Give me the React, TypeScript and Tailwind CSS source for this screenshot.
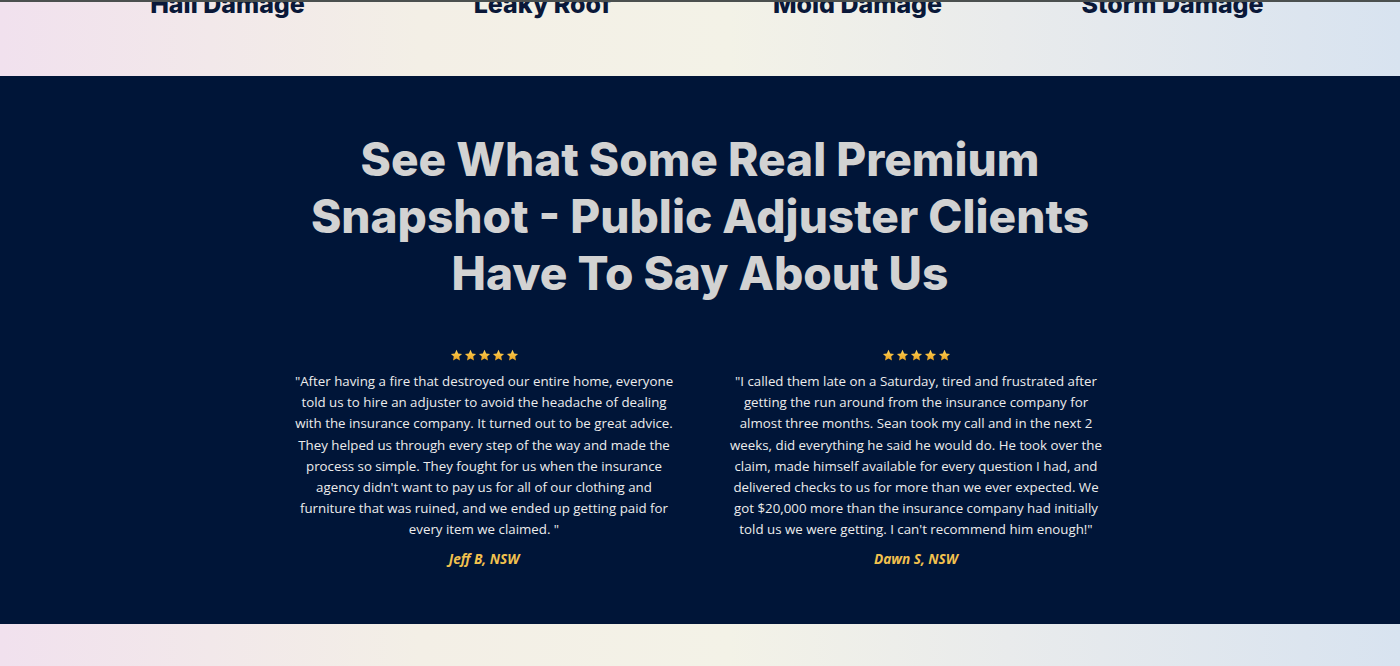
import React from "react";

const Star = () => (
  <svg width="13" height="13" viewBox="0 0 24 24">
    <defs>
      <linearGradient id="sg" x1="0" y1="0" x2="0" y2="1">
        <stop offset="0" stopColor="#ffd45a" />
        <stop offset="1" stopColor="#e9a21f" />
      </linearGradient>
    </defs>
    <path
      d="M12 1.5l3.1 6.6 7.2.9-5.3 5 1.4 7.1L12 17.6l-6.4 3.5 1.4-7.1-5.3-5 7.2-.9z"
      fill="url(#sg)"
    />
  </svg>
);

const Stars = () => (
  <div className="flex justify-center gap-[1px]">
    <Star />
    <Star />
    <Star />
    <Star />
    <Star />
  </div>
);

const items = ["Hail Damage", "Leaky Roof", "Mold Damage", "Storm Damage"];

const testimonials = [
  {
    text: "\"After having a fire that destroyed our entire home, everyone told us to hire an adjuster to avoid the headache of dealing with the insurance company. It turned out to be great advice. They helped us through every step of the way and made the process so simple. They fought for us when the insurance agency didn't want to pay us for all of our clothing and furniture that was ruined, and we ended up getting paid for every item we claimed. \"",
    name: "Jeff B, NSW",
  },
  {
    text: "\"I called them late on a Saturday, tired and frustrated after getting the run around from the insurance company for almost three months. Sean took my call and in the next 2 weeks, did everything he said he would do. He took over the claim, made himself available for every question I had, and delivered checks to us for more than we ever expected. We got $20,000 more than the insurance company had initially told us we were getting. I can't recommend him enough!\"",
    name: "Dawn S, NSW",
  },
];

export default function App() {
  return (
    <div className="w-[1400px] h-[666px] overflow-hidden" style={{ fontFamily: "'Open Sans', sans-serif" }}>
      <div className="h-[76px] bg-[linear-gradient(90deg,#f1e1ee_0%,#f3efe6_30%,#f3f2e7_52%,#e9ebec_72%,#d8e3f0_100%)] border-t-2 border-[#4b504f] overflow-hidden">
        <div className="mx-auto w-[1260px] grid grid-cols-4 -mt-[13px]">
          {items.map((t) => (
            <div
              key={t}
              className="text-center text-[25px] font-extrabold leading-[30px] text-[#0a1838]"
              style={{ fontFamily: "Inter, sans-serif" }}
            >
              {t}
            </div>
          ))}
        </div>
      </div>
      <div className="h-[548px] bg-[#001538] flex flex-col items-center pt-[55px]">
        <h2
          className="w-[860px] text-center text-[46px] leading-[57px] font-extrabold text-[#d2d2d2]"
          style={{ fontFamily: "Inter, sans-serif" }}
        >
          See What Some Real Premium Snapshot - Public Adjuster Clients Have To Say About Us
        </h2>
        <div className="mt-[47px] grid grid-cols-2 gap-[52px]">
          {testimonials.map((t) => (
            <div key={t.name} className="w-[380px] flex flex-col items-center">
              <Stars />
              <p className="mt-[9px] text-center text-[13.3px] leading-[21.2px] text-[#ececec]">{t.text}</p>
              <div className="mt-[8px] text-[13.6px] font-bold italic text-[#f2c14e]">{t.name}</div>
            </div>
          ))}
        </div>
      </div>
      <div className="h-[42px] bg-[linear-gradient(90deg,#f1e1ee_0%,#f3efe6_30%,#f3f2e7_52%,#e9ebec_72%,#d8e3f0_100%)]" />
    </div>
  );
}
